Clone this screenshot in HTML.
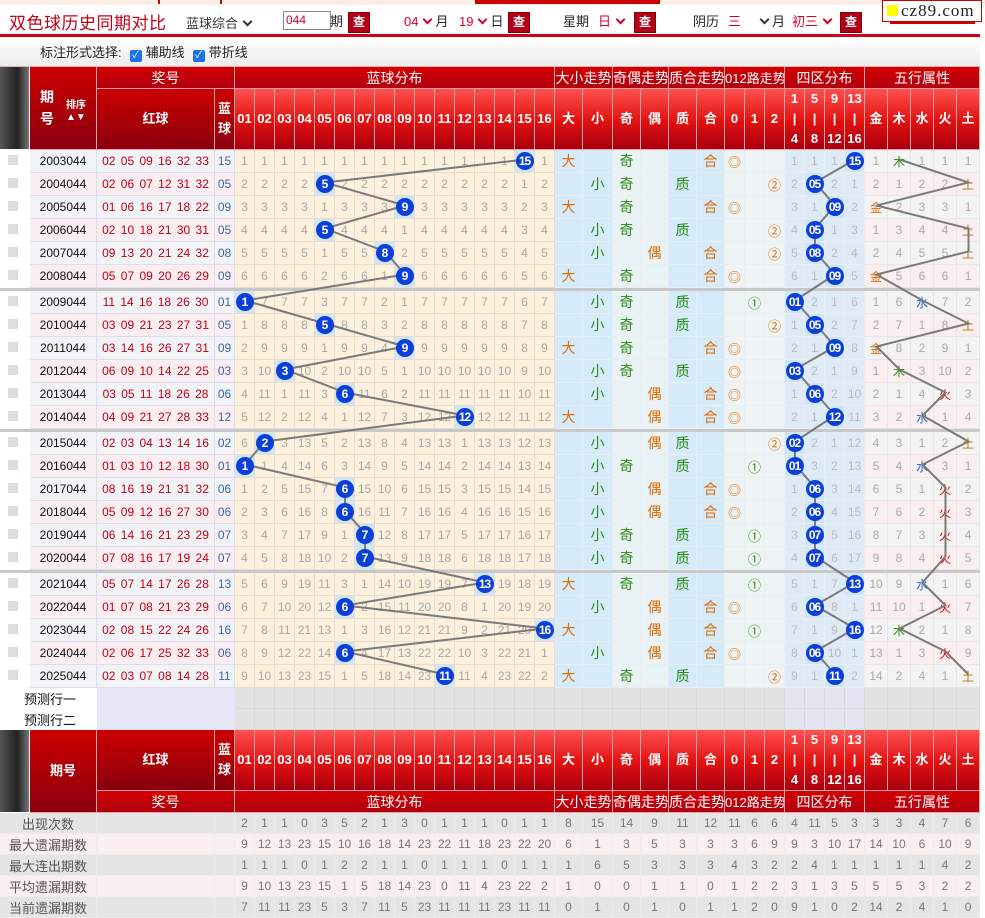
<!DOCTYPE html>
<html><head><meta charset="utf-8">
<style>
body{margin:0;width:985px;height:918px;overflow:hidden;font-family:"Liberation Sans","Noto Sans CJK SC",sans-serif;font-size:12px;background:#fff;position:relative;color:#333}
.top0{position:absolute;left:0;top:0;width:985px;height:5px;background:#fbeee6}
.top0 i{position:absolute;top:0;height:4px;background:#c00}
.title{position:absolute;left:9px;top:9px;font-size:17px;color:#c4001a;letter-spacing:0.5px}
.ln1{position:absolute;left:0;top:34px;width:980px;height:3px;background:#c8001a}
.bar{position:absolute;left:0;top:37px;width:980px;height:29px;background:linear-gradient(#fff,#ececec);border-bottom:1px solid #e8b0b0}
.lab{position:absolute;top:11px;font-size:13px;color:#222}
.red{color:#d4002a}
.sel{position:absolute;top:11px;font-size:13px}
.dd{display:inline-block;width:5px;height:5px;border-right:2px solid #333;border-bottom:2px solid #333;transform:rotate(45deg);margin:0 4px 3px 6px}
.dd.r{border-color:#d4002a}
.q{position:absolute;top:12px;width:20px;height:19px;background:#b0001a;color:#fff;font-size:12px;font-weight:bold;text-align:center;line-height:19px;border:1px solid #800}
.inp{position:absolute;left:283px;top:11px;width:44px;height:17px;border:1px solid #888;color:#d4002a;font-size:12px;line-height:17px;padding-left:2px}
.cb{display:inline-block;width:12px;height:12px;background:#1a73e8;border-radius:2px;color:#fff;font-size:10px;line-height:12px;text-align:center;vertical-align:-1px;margin:0 4px 0 8px}
.logo{position:absolute;left:882px;top:0;width:98px;height:20px;border:1px solid #c00;background:#fff;font-family:"Liberation Serif",serif;font-size:17px;line-height:20px;color:#222;letter-spacing:1px}
.logo i{display:inline-block;width:11px;height:11px;background:#ff0;margin:0 3px 0 4px}
.ul{position:absolute;left:890px;top:22px;width:85px;height:2px;background:#c00}
table{border-collapse:separate;border-spacing:0;table-layout:fixed;position:absolute;left:0;top:67px;width:980px}
td{padding:0;text-align:center;border-right:1px solid #e8dccf;border-bottom:1px solid #e8dccf;overflow:hidden;white-space:nowrap;color:#a8a8a8;background:#fdf0dc}
tr.h1 td{height:21px;background:linear-gradient(#d40000,#b00010);color:#fff;font-size:14px;border-color:#f0a0a0}
tr.h2 td{height:58px;background:linear-gradient(#ff5050,#e01010 55%,#a80010);color:#fff;font-weight:bold;font-size:13px;border-color:#f0a0a0;line-height:20px}
td.dk{background:linear-gradient(#cc0000,#8a0010)!important;font-size:13px}
td.th{background:linear-gradient(90deg,#555,#222 60%,#777)!important;border-color:#fff!important}
tr.d td{height:22px;font-size:12px}
tr.d td:nth-child(1){background:#fff;border-color:#fff}
tr.d td:nth-child(1) span{display:inline-block;width:10px;height:10px;background:#ddd;margin-left:-4px}
tr.d td:nth-child(2){color:#111;background:#f2f3f6;border-color:#dde}
tr.d td:nth-child(3){color:#c0001a;background:#f2f3f6;border-color:#dde;word-spacing:2px}
tr.d td:nth-child(4){color:#4466aa;background:#f2f3f6;border-color:#dde}
tr.e td:nth-child(2),tr.e td:nth-child(3),tr.e td:nth-child(4){background:#fbeef0}
tr.d td:nth-child(21),tr.d td:nth-child(22),tr.d td:nth-child(25),tr.d td:nth-child(26){background:#d5ebfa;border-color:#e8eef4;font-size:14px}
tr.d td:nth-child(23),tr.d td:nth-child(24){background:#e9f3f5;border-color:#e8eef4;font-size:14px}
tr.d td:nth-child(27),tr.d td:nth-child(28),tr.d td:nth-child(29){background:#eef3f3;border-color:#e8eef4;font-size:13px}
tr.d td:nth-child(n+30){background:#dfeaf7;border-color:#e8eef4;color:#bbb}
tr.d td:nth-child(n+34){background:#f3f3f3;border-color:#e6e6e6;color:#aaa}
tr.e td:nth-child(n+34){background:#fbeef0}
.o{color:#e06a00!important}.g{color:#2a8a10!important}.bu{color:#2266cc!important}.rd{color:#dd0000!important}.br{color:#c07000!important}
td.h{background:#cfe6fb!important}
td.h b{display:inline-block;width:18px;height:18px;border-radius:50%;background:#0c3fd8;color:#fff;font-size:12px;line-height:18px;font-weight:bold;position:relative;z-index:2;letter-spacing:-1px}
tr.sp td{height:3px;background:#c8c8c8;border:0;font-size:0}
tr.pr td{height:20px;background:#e2e2e2;border-color:#d8d8d8}
tr.pr td.pl{background:#fff;color:#111;font-size:13px;text-align:left;padding-left:24px;border-color:#fff}
tr.pr td.pv{background:#e6e6f6;border-color:#e6e6f6}
tr.pr td.pz{background:#e4e4f2}
tr.b2 td{height:21px;background:linear-gradient(#d40000,#b00010);color:#fff;font-size:14px;border-color:#f0a0a0}
tr.st td{height:20px;background:#e5e5e5;color:#777;font-size:12px;border-color:#ececec}
tr.st.e td{background:#fbeeee}
tr.st td.sl{color:#555;font-size:13px}
svg{position:absolute;left:0;top:0;z-index:1}
</style></head><body>
<div class="top0"><i style="left:158px;width:2px"></i><i style="left:220px;width:2px"></i><i style="left:475px;width:185px;background:#c00"></i></div>
<div class="title">双色球历史同期对比</div>
<div class="sel" style="left:186px;top:13px">蓝球综合<span class="dd"></span></div>
<div class="inp">044</div>
<div class="lab" style="left:330px">期</div>
<div class="q" style="left:348px">查</div>
<div class="sel red" style="left:404px">04<span class="dd r"></span><span style="color:#222">月</span></div>
<div class="sel red" style="left:459px">19<span class="dd r"></span><span style="color:#222">日</span></div>
<div class="q" style="left:508px">查</div>
<div class="lab" style="left:563px">星期</div>
<div class="sel red" style="left:598px">日<span class="dd r"></span></div>
<div class="q" style="left:634px">查</div>
<div class="lab" style="left:693px">阴历</div>
<div class="sel red" style="left:728px">三<span style="display:inline-block;width:14px"></span><span class="dd"></span><span style="color:#222">月</span></div>
<div class="sel red" style="left:792px">初三<span class="dd r"></span></div>
<div class="q" style="left:840px">查</div>
<div class="ul"></div>
<div class="logo"><i></i>cz89.com</div>
<div class="ln1"></div>
<div class="bar"><span style="position:absolute;left:40px;top:5px;font-size:13px;color:#222">标注形式选择:<span class="cb">✓</span>辅助线<span class="cb">✓</span>带折线</span></div>

<table>
<colgroup><col width="30"><col width="67"><col width="118"><col width="20">
<col width="20"><col width="20"><col width="20"><col width="20"><col width="20"><col width="20"><col width="20"><col width="20"><col width="20"><col width="20"><col width="20"><col width="20"><col width="20"><col width="20"><col width="20"><col width="20">
<col width="28"><col width="30"><col width="28"><col width="28"><col width="28"><col width="28"><col width="20"><col width="20"><col width="20"><col width="20"><col width="20"><col width="20"><col width="20"><col width="23"><col width="23"><col width="23"><col width="23"><col width="23"></colgroup>
<tr class="h1"><td class="th" rowspan="2"></td><td class="dk" rowspan="2" style="font-weight:bold"><span style="display:inline-block;line-height:22px">期<br>号</span> <span style="display:inline-block;font-size:10px;line-height:12px;vertical-align:4px;margin-left:8px">排序<br>▲▼</span></td><td colspan="2">奖号</td><td colspan="16">蓝球分布</td><td colspan="2">大小走势</td><td colspan="2">奇偶走势</td><td colspan="2">质合走势</td><td colspan="3" style="font-size:13px">012路走势</td><td colspan="4">四区分布</td><td colspan="5">五行属性</td></tr>
<tr class="h2"><td class="dk" style="font-weight:bold">红球</td><td class="dk">蓝<br>球</td><td>01</td><td>02</td><td>03</td><td>04</td><td>05</td><td>06</td><td>07</td><td>08</td><td>09</td><td>10</td><td>11</td><td>12</td><td>13</td><td>14</td><td>15</td><td>16</td><td>大</td><td>小</td><td>奇</td><td>偶</td><td>质</td><td>合</td><td>0</td><td>1</td><td>2</td><td>1<br>|<br>4</td><td>5<br>|<br>8</td><td>9<br>|<br>12</td><td>13<br>|<br>16</td><td>金</td><td>木</td><td>水</td><td>火</td><td>土</td></tr>

<tr class="d"><td><span></span></td><td>2003044</td><td>02 05 09 16 32 33</td><td>15</td><td>1</td><td>1</td><td>1</td><td>1</td><td>1</td><td>1</td><td>1</td><td>1</td><td>1</td><td>1</td><td>1</td><td>1</td><td>1</td><td>1</td><td class="h"><b>15</b></td><td>1</td><td class="o">大</td><td></td><td class="g">奇</td><td></td><td></td><td class="o">合</td><td class="o">◎</td><td></td><td></td><td>1</td><td>1</td><td>1</td><td class="h"><b>15</b></td><td>1</td><td class="g">木</td><td>1</td><td>1</td><td>1</td></tr>
<tr class="d e"><td><span></span></td><td>2004044</td><td>02 06 07 12 31 32</td><td>05</td><td>2</td><td>2</td><td>2</td><td>2</td><td class="h"><b>5</b></td><td>2</td><td>2</td><td>2</td><td>2</td><td>2</td><td>2</td><td>2</td><td>2</td><td>2</td><td>1</td><td>2</td><td></td><td class="g">小</td><td class="g">奇</td><td></td><td class="g">质</td><td></td><td></td><td></td><td class="o">②</td><td>2</td><td class="h"><b>05</b></td><td>2</td><td>1</td><td>2</td><td>1</td><td>2</td><td>2</td><td class="br">土</td></tr>
<tr class="d"><td><span></span></td><td>2005044</td><td>01 06 16 17 18 22</td><td>09</td><td>3</td><td>3</td><td>3</td><td>3</td><td>1</td><td>3</td><td>3</td><td>3</td><td class="h"><b>9</b></td><td>3</td><td>3</td><td>3</td><td>3</td><td>3</td><td>2</td><td>3</td><td class="o">大</td><td></td><td class="g">奇</td><td></td><td></td><td class="o">合</td><td class="o">◎</td><td></td><td></td><td>3</td><td>1</td><td class="h"><b>09</b></td><td>2</td><td class="o">金</td><td>2</td><td>3</td><td>3</td><td>1</td></tr>
<tr class="d e"><td><span></span></td><td>2006044</td><td>02 10 18 21 30 31</td><td>05</td><td>4</td><td>4</td><td>4</td><td>4</td><td class="h"><b>5</b></td><td>4</td><td>4</td><td>4</td><td>1</td><td>4</td><td>4</td><td>4</td><td>4</td><td>4</td><td>3</td><td>4</td><td></td><td class="g">小</td><td class="g">奇</td><td></td><td class="g">质</td><td></td><td></td><td></td><td class="o">②</td><td>4</td><td class="h"><b>05</b></td><td>1</td><td>3</td><td>1</td><td>3</td><td>4</td><td>4</td><td class="br">土</td></tr>
<tr class="d"><td><span></span></td><td>2007044</td><td>09 13 20 21 24 32</td><td>08</td><td>5</td><td>5</td><td>5</td><td>5</td><td>1</td><td>5</td><td>5</td><td class="h"><b>8</b></td><td>2</td><td>5</td><td>5</td><td>5</td><td>5</td><td>5</td><td>4</td><td>5</td><td></td><td class="g">小</td><td></td><td class="o">偶</td><td></td><td class="o">合</td><td></td><td></td><td class="o">②</td><td>5</td><td class="h"><b>08</b></td><td>2</td><td>4</td><td>2</td><td>4</td><td>5</td><td>5</td><td class="br">土</td></tr>
<tr class="d e"><td><span></span></td><td>2008044</td><td>05 07 09 20 26 29</td><td>09</td><td>6</td><td>6</td><td>6</td><td>6</td><td>2</td><td>6</td><td>6</td><td>1</td><td class="h"><b>9</b></td><td>6</td><td>6</td><td>6</td><td>6</td><td>6</td><td>5</td><td>6</td><td class="o">大</td><td></td><td class="g">奇</td><td></td><td></td><td class="o">合</td><td class="o">◎</td><td></td><td></td><td>6</td><td>1</td><td class="h"><b>09</b></td><td>5</td><td class="o">金</td><td>5</td><td>6</td><td>6</td><td>1</td></tr>
<tr class="sp"><td colspan="38"></td></tr>
<tr class="d"><td><span></span></td><td>2009044</td><td>11 14 16 18 26 30</td><td>01</td><td class="h"><b>1</b></td><td>7</td><td>7</td><td>7</td><td>3</td><td>7</td><td>7</td><td>2</td><td>1</td><td>7</td><td>7</td><td>7</td><td>7</td><td>7</td><td>6</td><td>7</td><td></td><td class="g">小</td><td class="g">奇</td><td></td><td class="g">质</td><td></td><td></td><td class="g">①</td><td></td><td class="h"><b>01</b></td><td>2</td><td>1</td><td>6</td><td>1</td><td>6</td><td class="bu">水</td><td>7</td><td>2</td></tr>
<tr class="d e"><td><span></span></td><td>2010044</td><td>03 09 21 23 27 31</td><td>05</td><td>1</td><td>8</td><td>8</td><td>8</td><td class="h"><b>5</b></td><td>8</td><td>8</td><td>3</td><td>2</td><td>8</td><td>8</td><td>8</td><td>8</td><td>8</td><td>7</td><td>8</td><td></td><td class="g">小</td><td class="g">奇</td><td></td><td class="g">质</td><td></td><td></td><td></td><td class="o">②</td><td>1</td><td class="h"><b>05</b></td><td>2</td><td>7</td><td>2</td><td>7</td><td>1</td><td>8</td><td class="br">土</td></tr>
<tr class="d"><td><span></span></td><td>2011044</td><td>03 14 16 26 27 31</td><td>09</td><td>2</td><td>9</td><td>9</td><td>9</td><td>1</td><td>9</td><td>9</td><td>4</td><td class="h"><b>9</b></td><td>9</td><td>9</td><td>9</td><td>9</td><td>9</td><td>8</td><td>9</td><td class="o">大</td><td></td><td class="g">奇</td><td></td><td></td><td class="o">合</td><td class="o">◎</td><td></td><td></td><td>2</td><td>1</td><td class="h"><b>09</b></td><td>8</td><td class="o">金</td><td>8</td><td>2</td><td>9</td><td>1</td></tr>
<tr class="d e"><td><span></span></td><td>2012044</td><td>06 09 10 14 22 25</td><td>03</td><td>3</td><td>10</td><td class="h"><b>3</b></td><td>10</td><td>2</td><td>10</td><td>10</td><td>5</td><td>1</td><td>10</td><td>10</td><td>10</td><td>10</td><td>10</td><td>9</td><td>10</td><td></td><td class="g">小</td><td class="g">奇</td><td></td><td class="g">质</td><td></td><td class="o">◎</td><td></td><td></td><td class="h"><b>03</b></td><td>2</td><td>1</td><td>9</td><td>1</td><td class="g">木</td><td>3</td><td>10</td><td>2</td></tr>
<tr class="d"><td><span></span></td><td>2013044</td><td>03 05 11 18 26 28</td><td>06</td><td>4</td><td>11</td><td>1</td><td>11</td><td>3</td><td class="h"><b>6</b></td><td>11</td><td>6</td><td>2</td><td>11</td><td>11</td><td>11</td><td>11</td><td>11</td><td>10</td><td>11</td><td></td><td class="g">小</td><td></td><td class="o">偶</td><td></td><td class="o">合</td><td class="o">◎</td><td></td><td></td><td>1</td><td class="h"><b>06</b></td><td>2</td><td>10</td><td>2</td><td>1</td><td>4</td><td class="rd">火</td><td>3</td></tr>
<tr class="d e"><td><span></span></td><td>2014044</td><td>04 09 21 27 28 33</td><td>12</td><td>5</td><td>12</td><td>2</td><td>12</td><td>4</td><td>1</td><td>12</td><td>7</td><td>3</td><td>12</td><td>12</td><td class="h"><b>12</b></td><td>12</td><td>12</td><td>11</td><td>12</td><td class="o">大</td><td></td><td></td><td class="o">偶</td><td></td><td class="o">合</td><td class="o">◎</td><td></td><td></td><td>2</td><td>1</td><td class="h"><b>12</b></td><td>11</td><td>3</td><td>2</td><td class="bu">水</td><td>1</td><td>4</td></tr>
<tr class="sp"><td colspan="38"></td></tr>
<tr class="d"><td><span></span></td><td>2015044</td><td>02 03 04 13 14 16</td><td>02</td><td>6</td><td class="h"><b>2</b></td><td>3</td><td>13</td><td>5</td><td>2</td><td>13</td><td>8</td><td>4</td><td>13</td><td>13</td><td>1</td><td>13</td><td>13</td><td>12</td><td>13</td><td></td><td class="g">小</td><td></td><td class="o">偶</td><td class="g">质</td><td></td><td></td><td></td><td class="o">②</td><td class="h"><b>02</b></td><td>2</td><td>1</td><td>12</td><td>4</td><td>3</td><td>1</td><td>2</td><td class="br">土</td></tr>
<tr class="d e"><td><span></span></td><td>2016044</td><td>01 03 10 12 18 30</td><td>01</td><td class="h"><b>1</b></td><td>1</td><td>4</td><td>14</td><td>6</td><td>3</td><td>14</td><td>9</td><td>5</td><td>14</td><td>14</td><td>2</td><td>14</td><td>14</td><td>13</td><td>14</td><td></td><td class="g">小</td><td class="g">奇</td><td></td><td class="g">质</td><td></td><td></td><td class="g">①</td><td></td><td class="h"><b>01</b></td><td>3</td><td>2</td><td>13</td><td>5</td><td>4</td><td class="bu">水</td><td>3</td><td>1</td></tr>
<tr class="d"><td><span></span></td><td>2017044</td><td>08 16 19 21 31 32</td><td>06</td><td>1</td><td>2</td><td>5</td><td>15</td><td>7</td><td class="h"><b>6</b></td><td>15</td><td>10</td><td>6</td><td>15</td><td>15</td><td>3</td><td>15</td><td>15</td><td>14</td><td>15</td><td></td><td class="g">小</td><td></td><td class="o">偶</td><td></td><td class="o">合</td><td class="o">◎</td><td></td><td></td><td>1</td><td class="h"><b>06</b></td><td>3</td><td>14</td><td>6</td><td>5</td><td>1</td><td class="rd">火</td><td>2</td></tr>
<tr class="d e"><td><span></span></td><td>2018044</td><td>05 09 12 16 27 30</td><td>06</td><td>2</td><td>3</td><td>6</td><td>16</td><td>8</td><td class="h"><b>6</b></td><td>16</td><td>11</td><td>7</td><td>16</td><td>16</td><td>4</td><td>16</td><td>16</td><td>15</td><td>16</td><td></td><td class="g">小</td><td></td><td class="o">偶</td><td></td><td class="o">合</td><td class="o">◎</td><td></td><td></td><td>2</td><td class="h"><b>06</b></td><td>4</td><td>15</td><td>7</td><td>6</td><td>2</td><td class="rd">火</td><td>3</td></tr>
<tr class="d"><td><span></span></td><td>2019044</td><td>06 14 16 21 23 29</td><td>07</td><td>3</td><td>4</td><td>7</td><td>17</td><td>9</td><td>1</td><td class="h"><b>7</b></td><td>12</td><td>8</td><td>17</td><td>17</td><td>5</td><td>17</td><td>17</td><td>16</td><td>17</td><td></td><td class="g">小</td><td class="g">奇</td><td></td><td class="g">质</td><td></td><td></td><td class="g">①</td><td></td><td>3</td><td class="h"><b>07</b></td><td>5</td><td>16</td><td>8</td><td>7</td><td>3</td><td class="rd">火</td><td>4</td></tr>
<tr class="d e"><td><span></span></td><td>2020044</td><td>07 08 16 17 19 24</td><td>07</td><td>4</td><td>5</td><td>8</td><td>18</td><td>10</td><td>2</td><td class="h"><b>7</b></td><td>13</td><td>9</td><td>18</td><td>18</td><td>6</td><td>18</td><td>18</td><td>17</td><td>18</td><td></td><td class="g">小</td><td class="g">奇</td><td></td><td class="g">质</td><td></td><td></td><td class="g">①</td><td></td><td>4</td><td class="h"><b>07</b></td><td>6</td><td>17</td><td>9</td><td>8</td><td>4</td><td class="rd">火</td><td>5</td></tr>
<tr class="sp"><td colspan="38"></td></tr>
<tr class="d"><td><span></span></td><td>2021044</td><td>05 07 14 17 26 28</td><td>13</td><td>5</td><td>6</td><td>9</td><td>19</td><td>11</td><td>3</td><td>1</td><td>14</td><td>10</td><td>19</td><td>19</td><td>7</td><td class="h"><b>13</b></td><td>19</td><td>18</td><td>19</td><td class="o">大</td><td></td><td class="g">奇</td><td></td><td class="g">质</td><td></td><td></td><td class="g">①</td><td></td><td>5</td><td>1</td><td>7</td><td class="h"><b>13</b></td><td>10</td><td>9</td><td class="bu">水</td><td>1</td><td>6</td></tr>
<tr class="d e"><td><span></span></td><td>2022044</td><td>01 07 08 21 23 29</td><td>06</td><td>6</td><td>7</td><td>10</td><td>20</td><td>12</td><td class="h"><b>6</b></td><td>2</td><td>15</td><td>11</td><td>20</td><td>20</td><td>8</td><td>1</td><td>20</td><td>19</td><td>20</td><td></td><td class="g">小</td><td></td><td class="o">偶</td><td></td><td class="o">合</td><td class="o">◎</td><td></td><td></td><td>6</td><td class="h"><b>06</b></td><td>8</td><td>1</td><td>11</td><td>10</td><td>1</td><td class="rd">火</td><td>7</td></tr>
<tr class="d"><td><span></span></td><td>2023044</td><td>02 08 15 22 24 26</td><td>16</td><td>7</td><td>8</td><td>11</td><td>21</td><td>13</td><td>1</td><td>3</td><td>16</td><td>12</td><td>21</td><td>21</td><td>9</td><td>2</td><td>21</td><td>20</td><td class="h"><b>16</b></td><td class="o">大</td><td></td><td></td><td class="o">偶</td><td></td><td class="o">合</td><td></td><td class="g">①</td><td></td><td>7</td><td>1</td><td>9</td><td class="h"><b>16</b></td><td>12</td><td class="g">木</td><td>2</td><td>1</td><td>8</td></tr>
<tr class="d e"><td><span></span></td><td>2024044</td><td>02 06 17 25 32 33</td><td>06</td><td>8</td><td>9</td><td>12</td><td>22</td><td>14</td><td class="h"><b>6</b></td><td>4</td><td>17</td><td>13</td><td>22</td><td>22</td><td>10</td><td>3</td><td>22</td><td>21</td><td>1</td><td></td><td class="g">小</td><td></td><td class="o">偶</td><td></td><td class="o">合</td><td class="o">◎</td><td></td><td></td><td>8</td><td class="h"><b>06</b></td><td>10</td><td>1</td><td>13</td><td>1</td><td>3</td><td class="rd">火</td><td>9</td></tr>
<tr class="d"><td><span></span></td><td>2025044</td><td>02 03 07 08 14 28</td><td>11</td><td>9</td><td>10</td><td>13</td><td>23</td><td>15</td><td>1</td><td>5</td><td>18</td><td>14</td><td>23</td><td class="h"><b>11</b></td><td>11</td><td>4</td><td>23</td><td>22</td><td>2</td><td class="o">大</td><td></td><td class="g">奇</td><td></td><td class="g">质</td><td></td><td></td><td></td><td class="o">②</td><td>9</td><td>1</td><td class="h"><b>11</b></td><td>2</td><td>14</td><td>2</td><td>4</td><td>1</td><td class="br">土</td></tr>

<tr class="pr"><td class="pl" colspan="2">预测行一</td><td class="pv"></td><td class="pv"></td><td></td><td></td><td></td><td></td><td></td><td></td><td></td><td></td><td></td><td></td><td></td><td></td><td></td><td></td><td></td><td></td><td></td><td></td><td></td><td></td><td></td><td></td><td></td><td></td><td></td><td class="pz"></td><td class="pz"></td><td class="pz"></td><td class="pz"></td><td></td><td></td><td></td><td></td><td></td></tr>
<tr class="pr"><td class="pl" colspan="2">预测行二 <span style="color:#d03000;margin-left:18px;font-size:11px">✚</span></td><td class="pv"></td><td class="pv"></td><td></td><td></td><td></td><td></td><td></td><td></td><td></td><td></td><td></td><td></td><td></td><td></td><td></td><td></td><td></td><td></td><td></td><td></td><td></td><td></td><td></td><td></td><td></td><td></td><td></td><td class="pz"></td><td class="pz"></td><td class="pz"></td><td class="pz"></td><td></td><td></td><td></td><td></td><td></td></tr>

<tr class="h2"><td class="th" rowspan="2"></td><td class="dk" rowspan="2" style="font-weight:bold">期号</td><td class="dk">红球</td><td class="dk">蓝<br>球</td><td>01</td><td>02</td><td>03</td><td>04</td><td>05</td><td>06</td><td>07</td><td>08</td><td>09</td><td>10</td><td>11</td><td>12</td><td>13</td><td>14</td><td>15</td><td>16</td><td>大</td><td>小</td><td>奇</td><td>偶</td><td>质</td><td>合</td><td>0</td><td>1</td><td>2</td><td>1<br>|<br>4</td><td>5<br>|<br>8</td><td>9<br>|<br>12</td><td>13<br>|<br>16</td><td>金</td><td>木</td><td>水</td><td>火</td><td>土</td></tr>
<tr class="b2"><td colspan="2">奖号</td><td colspan="16">蓝球分布</td><td colspan="2">大小走势</td><td colspan="2">奇偶走势</td><td colspan="2">质合走势</td><td colspan="3" style="font-size:13px">012路走势</td><td colspan="4">四区分布</td><td colspan="5">五行属性</td></tr>

<tr class="st"><td class="sl" colspan="2">出现次数</td><td></td><td></td><td>2</td><td>1</td><td>1</td><td>0</td><td>3</td><td>5</td><td>2</td><td>1</td><td>3</td><td>0</td><td>1</td><td>1</td><td>1</td><td>0</td><td>1</td><td>1</td><td>8</td><td>15</td><td>14</td><td>9</td><td>11</td><td>12</td><td>11</td><td>6</td><td>6</td><td>4</td><td>11</td><td>5</td><td>3</td><td>3</td><td>3</td><td>4</td><td>7</td><td>6</td></tr>
<tr class="st e"><td class="sl" colspan="2">最大遗漏期数</td><td></td><td></td><td>9</td><td>12</td><td>13</td><td>23</td><td>15</td><td>10</td><td>16</td><td>18</td><td>14</td><td>23</td><td>22</td><td>11</td><td>18</td><td>23</td><td>22</td><td>20</td><td>6</td><td>1</td><td>3</td><td>5</td><td>3</td><td>3</td><td>3</td><td>6</td><td>9</td><td>9</td><td>3</td><td>10</td><td>17</td><td>14</td><td>10</td><td>6</td><td>10</td><td>9</td></tr>
<tr class="st"><td class="sl" colspan="2">最大连出期数</td><td></td><td></td><td>1</td><td>1</td><td>1</td><td>0</td><td>1</td><td>2</td><td>2</td><td>1</td><td>1</td><td>0</td><td>1</td><td>1</td><td>1</td><td>0</td><td>1</td><td>1</td><td>1</td><td>6</td><td>5</td><td>3</td><td>3</td><td>3</td><td>4</td><td>3</td><td>2</td><td>2</td><td>4</td><td>1</td><td>1</td><td>1</td><td>1</td><td>1</td><td>4</td><td>2</td></tr>
<tr class="st e"><td class="sl" colspan="2">平均遗漏期数</td><td></td><td></td><td>9</td><td>10</td><td>13</td><td>23</td><td>15</td><td>1</td><td>5</td><td>18</td><td>14</td><td>23</td><td>0</td><td>11</td><td>4</td><td>23</td><td>22</td><td>2</td><td>1</td><td>0</td><td>0</td><td>1</td><td>1</td><td>0</td><td>1</td><td>2</td><td>2</td><td>3</td><td>1</td><td>3</td><td>5</td><td>5</td><td>5</td><td>3</td><td>2</td><td>2</td></tr>
<tr class="st"><td class="sl" colspan="2">当前遗漏期数</td><td></td><td></td><td>7</td><td>11</td><td>11</td><td>23</td><td>5</td><td>3</td><td>7</td><td>11</td><td>5</td><td>23</td><td>11</td><td>11</td><td>11</td><td>23</td><td>11</td><td>11</td><td>0</td><td>1</td><td>0</td><td>1</td><td>0</td><td>1</td><td>1</td><td>2</td><td>0</td><td>9</td><td>1</td><td>0</td><td>2</td><td>14</td><td>2</td><td>4</td><td>1</td><td>0</td></tr>
</table>

<svg width="985" height="918" viewBox="0 0 985 918">
<g fill="none" stroke="#7a7a7a" stroke-width="2" transform="translate(0,-1)">
<polyline points="525,160.5 325,183.5 405,206.5 325,229.5 385,252.5 405,275.5 245,301.5 325,324.5 405,347.5 285,370.5 345,393.5 465,416.5 265,442.5 245,465.5 345,488.5 345,511.5 365,534.5 365,557.5 485,583.5 345,606.5 545,629.5 345,652.5 445,675.5"/>
<polyline points="855,160.5 815,183.5 835,206.5 815,229.5 815,252.5 835,275.5 795,301.5 815,324.5 835,347.5 795,370.5 815,393.5 835,416.5 795,442.5 795,465.5 815,488.5 815,511.5 815,534.5 815,557.5 855,583.5 815,606.5 855,629.5 815,652.5 835,675.5"/>
<polyline points="899.5,160.5 968.5,183.5 876.5,206.5 968.5,229.5 968.5,252.5 876.5,275.5 922.5,301.5 968.5,324.5 876.5,347.5 899.5,370.5 945.5,393.5 922.5,416.5 968.5,442.5 922.5,465.5 945.5,488.5 945.5,511.5 945.5,534.5 945.5,557.5 922.5,583.5 945.5,606.5 899.5,629.5 945.5,652.5 968.5,675.5"/>
</g>
</svg>
</body></html>
